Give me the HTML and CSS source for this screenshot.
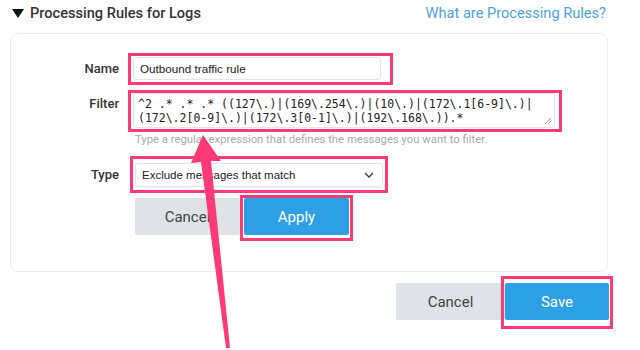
FILE: index.html
```html
<!DOCTYPE html>
<html>
<head>
<meta charset="utf-8">
<link rel="stylesheet" href="styles.css">
</head>
<body>
<div class="page">
  <div class="header">
    <div class="title">
      <svg class="caret" width="12" height="9" viewBox="0 0 12 9"><path d="M0 0 L12 0 L6 9 Z" fill="#111"/></svg>
      <span>Processing Rules for Logs</span>
    </div>
    <a class="help-link">What are Processing Rules?</a>
  </div>

  <div class="card">
    <div class="row row-name">
      <div class="label">Name</div>
      <div class="mark mark-name">
        <div class="input">Outbound traffic rule</div>
      </div>
    </div>

    <div class="row row-filter">
      <div class="label label-top">Filter</div>
      <div class="mark mark-filter">
        <div class="textarea">^2 .* .* .* ((127\.)|(169\.254\.)|(10\.)|(172\.1[6-9]\.)|<br>(172\.2[0-9]\.)|(172\.3[0-1]\.)|(192\.168\.)).*
          <svg class="grip" width="8" height="8" viewBox="0 0 8 8"><path d="M7 1 L1 7 M7 4 L4 7" stroke="#999" stroke-width="1"/></svg>
        </div>
      </div>
    </div>
    <div class="hint">Type a regular expression that defines the messages you want to filter.</div>

    <div class="row row-type">
      <div class="label">Type</div>
      <div class="mark mark-type">
        <div class="select">
          <span>Exclude messages that match</span>
          <svg width="10" height="6" viewBox="0 0 10 6"><path d="M1 1 L5 5 L9 1" fill="none" stroke="#333" stroke-width="1.3"/></svg>
        </div>
      </div>
    </div>

    <div class="actions">
      <div class="btn btn-grey btn-inner-cancel">Cancel</div>
      <div class="mark mark-apply">
        <div class="btn btn-blue">Apply</div>
      </div>
    </div>
  </div>

  <div class="footer">
    <div class="btn btn-grey btn-foot-cancel">Cancel</div>
    <div class="mark mark-save">
      <div class="btn btn-blue btn-save">Save</div>
    </div>
  </div>

  <svg class="arrow" width="640" height="350" viewBox="0 0 640 350">
    <polygon fill="#fb3a77" points="203,135 221,161 211,161 230,348 226,348 201,162 191,163"/>
  </svg>
</div>
</body>
</html>
```

FILE: styles.css
```css
* { box-sizing: border-box; }
html, body { margin: 0; padding: 0; background: #fff; }
body { font-family: Roboto, "Liberation Sans", sans-serif; color: #333; width: 640px; height: 350px; overflow: hidden; }
.page { position: relative; width: 640px; height: 350px; }

.header { height: 26px; display: flex; align-items: center; justify-content: space-between; padding: 0 34px 0 12px; }
.title { display: flex; align-items: center; gap: 6px; font-size: 14.6px; font-weight: 500; color: #333; }
.caret { display: block; }
.help-link { font-size: 14.6px; color: #4aa3df; }

.card { margin: 7px 32px 0 10px; height: 239px; border: 1px solid #ececec; border-radius: 8px; padding-top: 19px; }

.row { display: flex; align-items: center; }
.label { width: 108px; text-align: right; font-size: 13px; font-weight: 500; color: #333; line-height: 16px; margin-right: 9px; }
.label-top { align-self: flex-start; padding-top: 6px; }

.mark { border: 3px solid #fb3a77; }
.mark-name { width: 265px; height: 32px; padding: 1px 9px 2px 2px; }
.input { width: 248px; height: 23px; border: 1px solid #e4e4e4; border-radius: 3px; font-family: "Liberation Sans", Arial, sans-serif; font-size: 11.7px; line-height: 21px; padding-left: 6px; color: #222; }

.row-filter { margin-top: 5px; }
.mark-filter { width: 434px; height: 42px; padding: 0 4px 1px 2px; }
.textarea { position: relative; width: 422px; height: 35px; border: 1px solid #e4e4e4; border-radius: 3px; font-family: "DejaVu Sans Mono", monospace; font-size: 11.5px; line-height: 14px; padding: 3px 0 0 4px; color: #222; white-space: nowrap; }
.grip { position: absolute; right: 2px; bottom: 2px; }

.hint { margin: 1px 0 0 124px; font-size: 11.3px; line-height: 14px; color: #a8a8a8; }

.row-type { margin-top: 9px; }
.row-type .label { margin-right: 11px; }
.mark-type { width: 258px; height: 37px; padding: 4px 2px 3px 2px; }
.select { width: 248px; height: 24px; border: 1px solid #e4e4e4; border-radius: 3px; display: flex; align-items: center; justify-content: space-between; padding: 0 8px 0 6px; font-family: "Liberation Sans", Arial, sans-serif; font-size: 11.5px; color: #222; }
.select svg { display: block; }

.actions { display: flex; align-items: flex-start; margin: 2px 0 0 124px; }
.btn { height: 37px; display: flex; align-items: center; justify-content: center; font-size: 15px; border-radius: 2px; }
.btn-grey { background: #dfe3e7; color: #444; }
.btn-blue { background: #2d9fe4; color: #fff; }
.btn-inner-cancel { width: 105px; margin-top: 3px; }
.mark-apply { padding: 0 1px 3px 1px; }
.mark-apply .btn { width: 105px; }

.footer { display: flex; justify-content: flex-end; align-items: flex-start; margin-top: 4px; padding-right: 27px; }
.btn-foot-cancel { width: 109px; margin-top: 7px; margin-right: -4px; }
.mark-save { padding: 4px 1px 6px 1px; }
.btn-save { width: 104px; }

.arrow { position: absolute; left: 0; top: 0; pointer-events: none; }
```
